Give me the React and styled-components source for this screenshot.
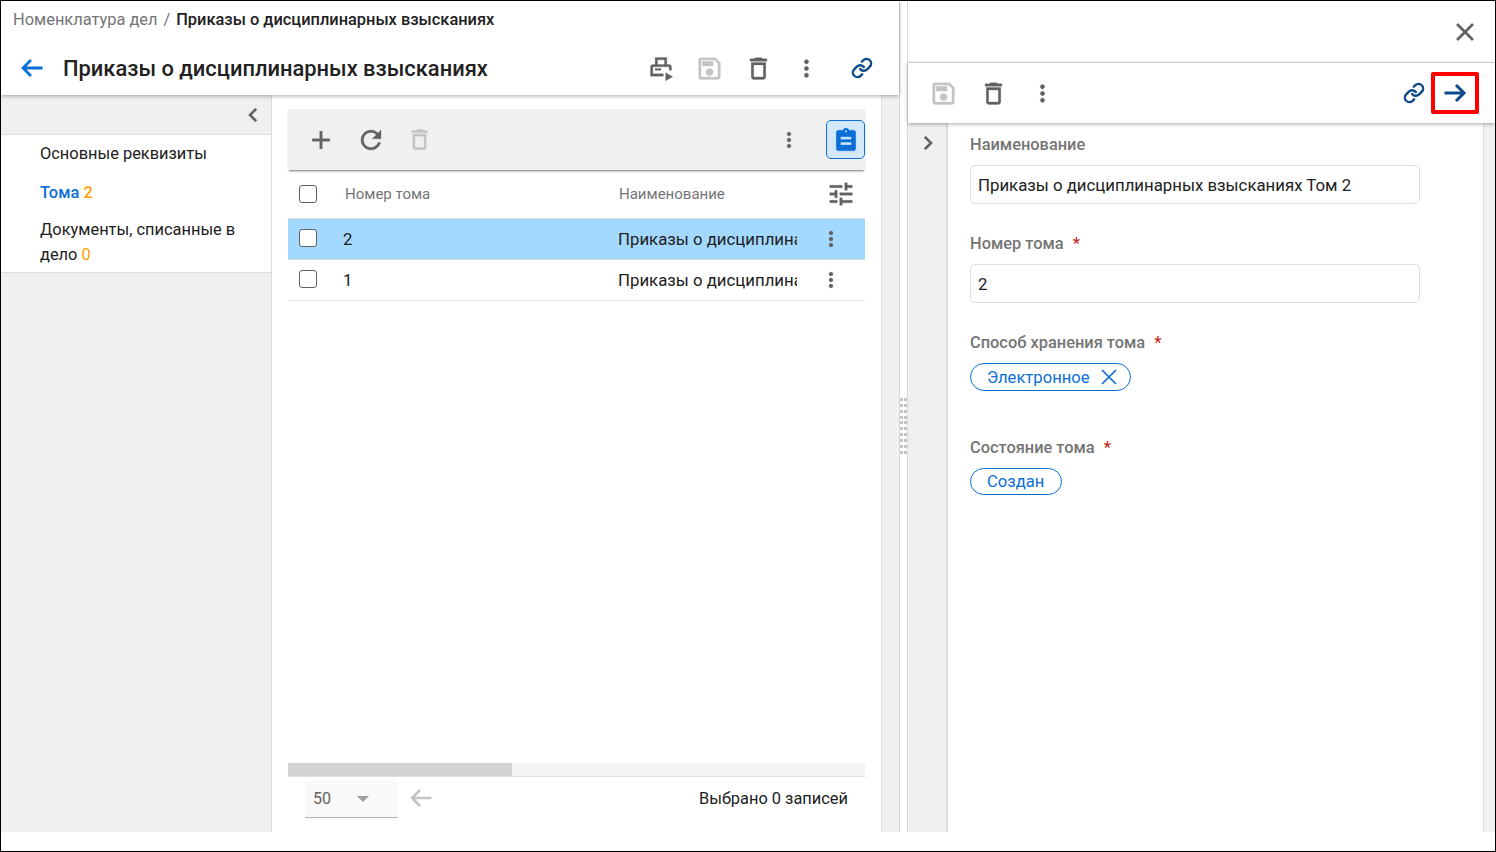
import React from 'react'
import styled, { createGlobalStyle } from 'styled-components'

const paths = {
  save: 'M17 3H5c-1.11 0-2 .9-2 2v14c0 1.1.89 2 2 2h14c1.1 0 2-.9 2-2V7l-4-4zm2 16H5V5h11.17L19 7.83V19zm-7-7c-1.66 0-3 1.34-3 3s1.34 3 3 3 3-1.34 3-3-1.34-3-3-3zM6 6h9v4H6z',
  trash: 'M6 19c0 1.1.9 2 2 2h8c1.1 0 2-.9 2-2V7H6v12zM8 9h8v10H8V9zm7.5-5l-1-1h-5l-1 1H5v2h14V4z',
  more: 'M12 8c1.1 0 2-.9 2-2s-.9-2-2-2-2 .9-2 2 .9 2 2 2zm0 2c-1.1 0-2 .9-2 2s.9 2 2 2 2-.9 2-2-.9-2-2-2zm0 6c-1.1 0-2 .9-2 2s.9 2 2 2 2-.9 2-2-.9-2-2-2z',
  add: 'M19 13h-6v6h-2v-6H5v-2h6V5h2v6h6v2z',
  refresh: 'M17.65 6.35C16.2 4.9 14.21 4 12 4c-4.42 0-7.99 3.58-7.99 8s3.57 8 7.99 8c3.73 0 6.84-2.55 7.73-6h-2.08c-.82 2.33-3.04 4-5.65 4-3.31 0-6-2.69-6-6s2.69-6 6-6c1.66 0 3.14.69 4.22 1.78L13 11h7V4l-2.35 2.35z',
  tune: 'M3 17v2h6v-2H3zM3 5v2h10V5H3zm10 16v-2h8v-2h-8v-2h-2v6h2zM7 9v2H3v2h4v2h2V9H7zm14 4v-2H11v2h10zm-6-4h2V7h4V5h-4V3h-2v6z',
  close: 'M19 6.41L17.59 5 12 10.59 6.41 5 5 6.41 10.59 12 5 17.59 6.41 19 12 13.41 17.59 19 19 17.59 13.41 12z',
  left: 'M15.41 7.41L14 6l-6 6 6 6 1.41-1.41L10.83 12z',
  right: 'M10 6L8.59 7.41 13.17 12l-4.58 4.58L10 18l6-6z',
  clipboard: 'M19 3h-4.18C14.4 1.84 13.3 1 12 1s-2.4.84-2.82 2H5c-1.1 0-2 .9-2 2v15c0 1.1.9 2 2 2h14c1.1 0 2-.9 2-2V5c0-1.1-.9-2-2-2zm-7 0c.55 0 1 .45 1 1s-.45 1-1 1-1-.45-1-1 .45-1 1-1zM7 9h10v2.5H7V9zm0 5h10v2.5H7V14z',
  print: 'M7 3h10v6h-2V5H9v4H7V3zM5 9h14c1.1 0 2 .9 2 2v3h-2v-3H5v6h9v2H3v-8c0-1.1.9-2 2-2zm2 3.500h5v1.500H7v-1.500zM16 16l6 3.500-6 3.500v-7z',
}

const Icon = ({ name, size = 24, color = '#616161', bold = 0.25 }) => (
  <svg width={size} height={size} viewBox="0 0 24 24" fill={color} stroke={color} strokeWidth={bold} style={{ display: 'block' }}>
    <path fillRule="evenodd" d={paths[name]} />
  </svg>
)

const Arrow = ({ color, flip, weight = 3 }) => (
  <svg width="24" height="22" viewBox="0 0 24 22" fill="none" stroke={color} strokeWidth={weight} style={{ display: 'block', transform: flip ? 'scaleX(-1)' : 'none' }}>
    <path d="M1.500 11H21M13 3l8 8-8 8" />
  </svg>
)

const LinkIcon = ({ color = '#0d4a8c' }) => (
  <svg width="22" height="22" viewBox="0 0 24 24" fill="none" stroke={color} strokeWidth="2.6" strokeLinecap="round" strokeLinejoin="round" style={{ display: 'block' }}>
    <path d="M10 13a5 5 0 0 0 7.54.54l3-3a5 5 0 0 0-7.07-7.07l-1.72 1.71" />
    <path d="M14 11a5 5 0 0 0-7.54-.54l-3 3a5 5 0 0 0 7.07 7.07l1.71-1.71" />
  </svg>
)

const Global = createGlobalStyle`
  html, body { margin: 0; padding: 0; background: #fff; }
  body { font-family: Roboto, "Noto Sans", sans-serif; color: #212121; }
  * { box-sizing: border-box; }
`

const Frame = styled.div`
  width: 1496px;
  height: 852px;
  border: 1px solid #000;
  overflow: hidden;
  padding-bottom: 19px;
  display: flex;
  background: #fff;
`
const LeftPane = styled.div`
  width: 899px;
  display: flex;
  flex-direction: column;
  border-right: 1px solid #d9d9d9;
`
const Header = styled.div`
  height: 94px;
  flex: none;
  padding: 10px 0 0 12px;
  position: relative;
  z-index: 2;
  background: #fff;
  box-shadow: 0 1px 4px rgba(0, 0, 0, 0.35);
`
const Crumbs = styled.div`
  font-size: 16.4px;
  line-height: 18px;
  color: #757575;
  display: flex;
  gap: 6px;
  b { font-weight: 500; color: #212121; }
`
const TitleRow = styled.div`
  display: flex;
  align-items: center;
  margin-top: 19px;
  height: 40px;
`
const BackBtn = styled.div`
  width: 50px;
  padding-left: 7px;
`
const Title = styled.h1`
  margin: 0;
  flex: 1;
  font-size: 21.9px;
  font-weight: 500;
  color: #212121;
`
const TitleActions = styled.div`
  display: flex;
  align-items: center;
  margin-right: 26px;
  gap: 20px;
`
const LinkSlot = styled.div`
  margin-left: 11px;
`
const Body = styled.div`
  flex: 1;
  display: flex;
  min-height: 0;
`
const Sidebar = styled.div`
  width: 271px;
  flex: none;
  background: #f0f0f0;
  border-right: 1px solid #ddd;
`
const Collapse = styled.div`
  height: 40px;
  display: flex;
  align-items: center;
  justify-content: flex-end;
  padding: 0 4px 0 0;
  border-bottom: 1px solid #ddd;
`
const Menu = styled.div`
  background: #fff;
  border-bottom: 1px solid #ddd;
  padding: 0 30px 0 39px;
  height: 138px;
`
const MenuItem = styled.div`
  font-size: 16.4px;
  line-height: 25px;
  padding-top: ${p => p.$top}px;
  color: ${p => (p.$active ? '#0b6fd6' : '#212121')};
  font-weight: ${p => (p.$active ? 500 : 400)};
  span { color: #ffa000; font-weight: ${p => (p.$active ? 500 : 400)}; }
`
const Content = styled.div`
  flex: 1;
  display: flex;
  flex-direction: column;
  padding: 14px 16px 0;
  min-width: 0;
`
const Toolbar = styled.div`
  height: 61px;
  flex: none;
  background: #f0f0f0;
  display: flex;
  align-items: center;
  padding: 0 0 0 18px;
  gap: 20px;
  position: relative;
  z-index: 1;
  box-shadow: 0 2px 2px -1px rgba(0, 0, 0, 0.55);
`
const Spacer = styled.div`
  flex: 1;
`
const ToggleBtn = styled.div`
  width: 39px;
  height: 39px;
  margin-left: 5px;
  border: 1px solid #0b6fd6;
  border-radius: 5px;
  background: #d3e9fb;
  display: flex;
  align-items: center;
  justify-content: center;
`
const Row = styled.div`
  display: grid;
  grid-template-columns: 57px 274px 1fr 68px;
  align-items: center;
  height: ${p => p.$h}px;
  background: ${p => (p.$selected ? '#a3d8ff' : '#fff')};
  border-bottom: 1px solid #e0e0e0;
  font-size: 16.8px;
`
const Check = styled.div`
  width: 18px;
  height: 18px;
  margin: 0 0 ${p => (p.$raised ? 2 : 0)}px 11px;
  border: 1.5px solid #616161;
  border-radius: 3px;
  background: #fff;
`
const HeadCell = styled.div`
  font-size: 15px;
  color: #757575;
`
const Cell = styled.div`
  width: ${p => p.$w || 'auto'};
  overflow: hidden;
  white-space: nowrap;
  margin-left: ${p => p.$ml}px;
`
const RowAction = styled.div`
  display: flex;
  justify-content: ${p => (p.$end ? 'flex-end' : 'center')};
  padding-right: ${p => (p.$end ? 9 : 0)}px;
`
const Filler = styled.div`
  flex: 1;
`
const Scrollbar = styled.div`
  height: 14px;
  flex: none;
  background: #f5f5f5;
  border-bottom: 1px solid #ddd;
`
const Thumb = styled.div`
  width: 224px;
  height: 13px;
  background: #d3d3d3;
`
const Pager = styled.div`
  height: 55px;
  flex: none;
  display: flex;
  align-items: flex-start;
  padding: 3px 17px 0;
`
const PageSize = styled.div`
  width: 93px;
  height: 38px;
  background: #f9f9f9;
  border-bottom: 1px solid #b5b5b5;
  border-radius: 4px 4px 0 0;
  display: flex;
  align-items: center;
  padding-left: 8px;
  font-size: 16px;
  color: #616161;
`
const Caret = styled.div`
  width: 0;
  height: 0;
  margin-left: 26px;
  border-left: 6.5px solid transparent;
  border-right: 6.5px solid transparent;
  border-top: 6.5px solid #9e9e9e;
`
const PagerBack = styled.div`
  margin: 7px 0 0 11px;
`
const Selected = styled.div`
  margin-left: auto;
  padding-top: 9px;
  font-size: 16.4px;
`
const Gutter = styled.div`
  width: 18px;
  flex: none;
  background: #f0f0f0;
  border-left: 1px solid #ddd;
`
const Splitter = styled.div`
  width: 7px;
  flex: none;
  padding: 397px 0 0 0;
`
const Dots = styled.div`
  display: grid;
  grid-template-columns: 3px 3px;
  grid-auto-rows: 3px;
  column-gap: 1px;
  row-gap: 2.85px;
`
const Dot = styled.div`
  background: #c4c4c4;
`
const RightPane = styled.div`
  flex: 1;
  display: flex;
  flex-direction: column;
  border-left: 1px solid #d9d9d9;
  min-width: 0;
`
const CloseBar = styled.div`
  height: 62px;
  flex: none;
  display: flex;
  align-items: center;
  justify-content: flex-end;
  padding: 0 15px 0 0;
  border-bottom: 1px solid #ddd;
`
const RightToolbar = styled.div`
  height: 60px;
  flex: none;
  display: flex;
  align-items: center;
  padding: 0 16px 0 21px;
  gap: 21px;
  position: relative;
  z-index: 2;
  background: #fff;
  box-shadow: 0 1px 4px rgba(0, 0, 0, 0.35);
`
const ArrowBox = styled.div`
  width: 48px;
  height: 42px;
  margin-left: -14.5px;
  border: 4px solid #f00;
  border-radius: 2px;
  display: flex;
  align-items: center;
  justify-content: center;
`
const RightBody = styled.div`
  flex: 1;
  display: flex;
  min-height: 0;
  background: #f0f0f0;
`
const ExpandStrip = styled.div`
  width: 38px;
  flex: none;
  padding: 6px 0 0 6px;
`
const Form = styled.div`
  width: 538px;
  background: #fff;
  border-left: 2px solid #ddd;
  border-right: 1px solid #ddd;
  padding: 12px 0 0 22px;
`
const Label = styled.div`
  font-size: 16.4px;
  font-weight: 500;
  line-height: 20px;
  color: #757575;
  margin-top: ${p => p.$top || 0}px;
  i { color: #c62817; font-style: normal; margin-left: 5px; }
`
const TextBox = styled.div`
  width: 450px;
  height: 39px;
  margin-top: 10px;
  padding-left: 7px;
  border: 1px solid #ddd;
  border-radius: 5px;
  display: flex;
  align-items: center;
  font-size: 16.8px;
`
const Chip = styled.div`
  display: inline-flex;
  align-items: center;
  gap: 10px;
  height: ${p => p.$h}px;
  margin-top: 10px;
  padding: 0 ${p => p.$pr}px 0 16px;
  border: 1px solid #0b6fd6;
  border-radius: 14px;
  font-size: 16.6px;
  color: #0b6fd6;
`

const dots = Array.from({ length: 20 }, (_, i) => i)

export default function App() {
  return (
    <Frame>
      <Global />
      <LeftPane>
        <Header>
          <Crumbs>Номенклатура дел <span>/</span> <b>Приказы о дисциплинарных взысканиях</b></Crumbs>
          <TitleRow>
            <BackBtn><Arrow color="#0b6fd6" flip weight={2.8} /></BackBtn>
            <Title>Приказы о дисциплинарных взысканиях</Title>
            <TitleActions>
              <Icon name="print" size={28} />
              <Icon name="save" size={29} color="#c4c4c4" />
              <Icon name="trash" size={29} />
              <Icon name="more" size={27} />
              <LinkSlot><LinkIcon /></LinkSlot>
            </TitleActions>
          </TitleRow>
        </Header>
        <Body>
          <Sidebar>
            <Collapse><Icon name="left" size={28} /></Collapse>
            <Menu>
              <MenuItem $top={6}>Основные реквизиты</MenuItem>
              <MenuItem $top={14} $active>Тома <span>2</span></MenuItem>
              <MenuItem $top={12}>Документы, списанные в дело <span>0</span></MenuItem>
            </Menu>
          </Sidebar>
          <Content>
            <Toolbar>
              <Icon name="add" size={30} />
              <Icon name="refresh" size={30} />
              <Icon name="trash" size={27} color="#c4c4c4" />
              <Spacer />
              <Icon name="more" />
              <ToggleBtn><Icon name="clipboard" size={26} color="#0b6fd6" /></ToggleBtn>
            </Toolbar>
            <Row $h={49}>
              <Check />
              <HeadCell>Номер тома</HeadCell>
              <HeadCell>Наименование</HeadCell>
              <RowAction $end><Icon name="tune" size={30} /></RowAction>
            </Row>
            <Row $h={41} $selected>
              <Check $raised />
              <Cell $ml={-2}>2</Cell>
              <Cell $ml={-1} $w="179px">Приказы о дисциплинарных</Cell>
              <RowAction><Icon name="more" /></RowAction>
            </Row>
            <Row $h={41}>
              <Check $raised />
              <Cell $ml={-2}>1</Cell>
              <Cell $ml={-1} $w="179px">Приказы о дисциплинарных</Cell>
              <RowAction><Icon name="more" /></RowAction>
            </Row>
            <Filler />
            <Scrollbar><Thumb /></Scrollbar>
            <Pager>
              <PageSize>50<Caret /></PageSize>
              <PagerBack><Arrow color="#c4c4c4" flip weight={2.6} /></PagerBack>
              <Selected>Выбрано 0 записей</Selected>
            </Pager>
          </Content>
          <Gutter />
        </Body>
      </LeftPane>
      <Splitter><Dots>{dots.map(i => <Dot key={i} />)}</Dots></Splitter>
      <RightPane>
        <CloseBar><Icon name="close" size={30} /></CloseBar>
        <RightToolbar>
          <Icon name="save" size={29} color="#c4c4c4" />
          <Icon name="trash" size={29} />
          <Icon name="more" size={27} />
          <Spacer />
          <LinkIcon />
          <ArrowBox><Arrow color="#0d4a8c" /></ArrowBox>
        </RightToolbar>
        <RightBody>
          <ExpandStrip><Icon name="right" size={28} /></ExpandStrip>
          <Form>
            <Label>Наименование</Label>
            <TextBox>Приказы о дисциплинарных взысканиях Том 2</TextBox>
            <Label $top={30}>Номер тома <i>*</i></Label>
            <TextBox>2</TextBox>
            <Label $top={30}>Способ хранения тома <i>*</i></Label>
            <Chip $h={28} $pr={12}>
              Электронное
              <svg width="18" height="18" viewBox="0 0 18 18" stroke="#0b6fd6" strokeWidth="1.7" fill="none"><path d="M2 2l14 14M16 2L2 16" /></svg>
            </Chip>
            <Label $top={47}>Состояние тома <i>*</i></Label>
            <Chip $h={27} $pr={17}>Создан</Chip>
          </Form>
        </RightBody>
      </RightPane>
    </Frame>
  )
}
